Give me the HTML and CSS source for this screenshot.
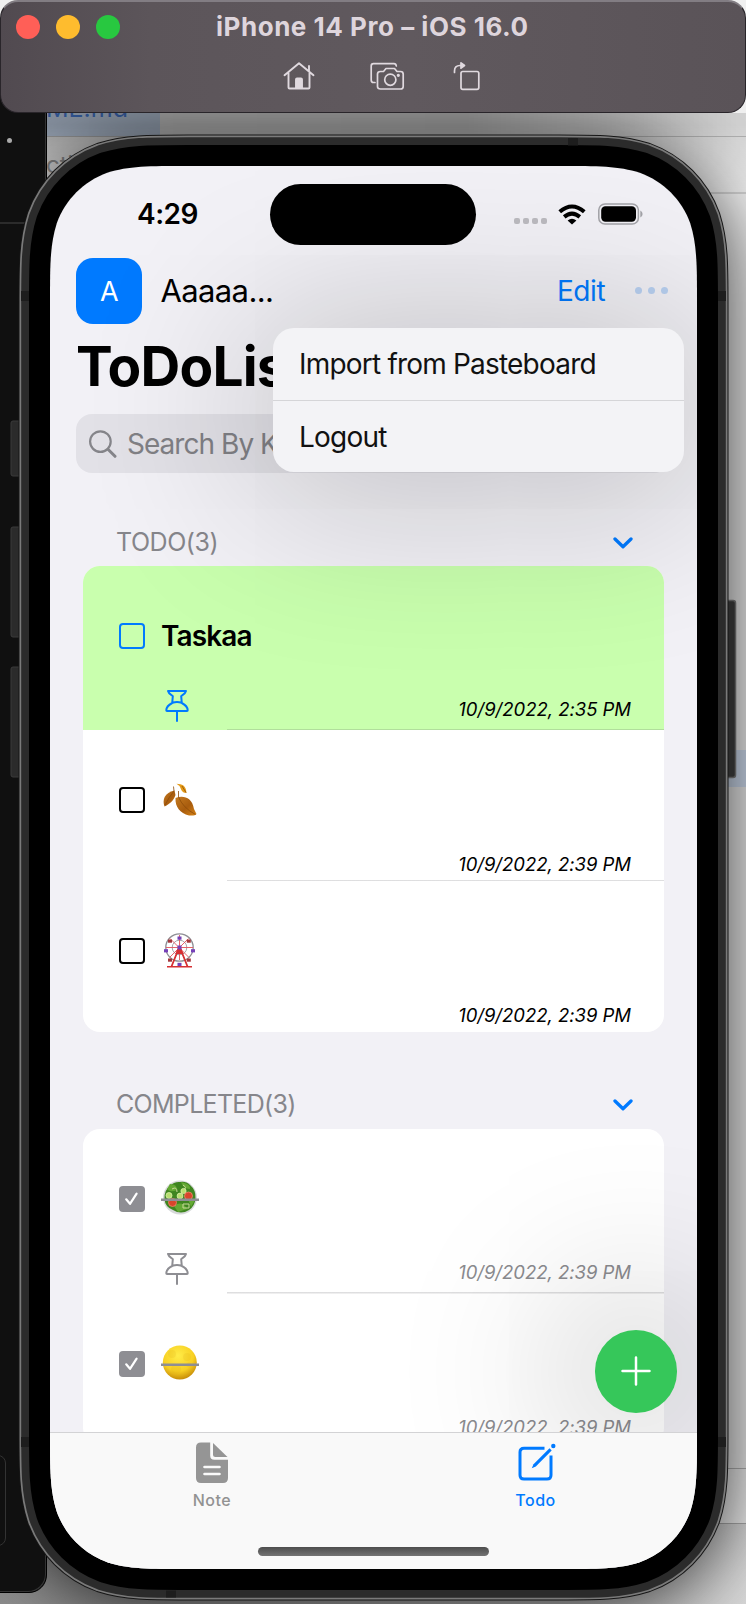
FILE: index.html
```html
<!DOCTYPE html>
<html lang="en">
<head>
<meta charset="utf-8">
<title>Simulator</title>
<link rel="stylesheet" href="styles.css">
</head>
<body>
<svg class="defs" width="0" height="0">
  <defs>
    <path id="screen-shape" d="M138.3 0H508.7C548.5 0 568.4 0 589.8 6.8C613.3 15.3 631.7 33.7 640.2 57.2C647 78.6 647 98.5 647 138.3V1264.7C647 1304.5 647 1324.4 640.2 1345.8C631.7 1369.3 613.3 1387.7 589.8 1396.2C568.4 1403 548.5 1403 508.7 1403H138.3C98.5 1403 78.6 1403 57.2 1396.2C33.7 1387.7 15.3 1369.3 6.8 1345.8C0 1324.4 0 1304.5 0 1264.7V138.3C0 98.5 0 78.6 6.8 57.2C15.3 33.7 33.7 15.3 57.2 6.8C78.6 0 98.5 0 138.3 0Z"/>
    <symbol id="pin" viewBox="0 0 24 34">
      <path d="M3 1.9H21C20.4 4.4 17.6 6 16.2 7.3L16.8 14C20 15.6 22.6 18.5 22.7 21.3Q22.7 22 22 22H2Q1.300 22 1.3 21.3C1.400 18.500 4 15.600 7.200 14L7.800 7.300C6.400 6 3.600 4.400 3 1.900ZM7.500 13.700Q12 12.400 16.500 13.700M12 22V32" fill="none" stroke="currentColor" stroke-width="2" stroke-linecap="round" stroke-linejoin="round"/>
    </symbol>
    <symbol id="chevron" viewBox="0 0 20 12">
      <path d="M2 2 10 9.800 18 2" fill="none" stroke="currentColor" stroke-width="3.300" stroke-linecap="round" stroke-linejoin="round"/>
    </symbol>
    <symbol id="tick" viewBox="0 0 25 25">
      <path d="M7.200 13.300 11 17.800 17.600 7.600" fill="none" stroke="#fff" stroke-width="2.200" stroke-linecap="round" stroke-linejoin="round"/>
    </symbol>
  </defs>
</svg>

<div class="desktop">
  <div class="editor">
    <div class="editor-file">ME.md</div>
    <div class="editor-text">cti</div>
    <div class="editor-mark"></div>
    <div class="editor-foot"></div>
  </div>
  <div class="terminal">
    <i class="terminal-dot"></i>
    <i class="terminal-rule"></i>
    <i class="terminal-box"></i>
  </div>

  <div class="phone-shadow"></div>
  <svg class="phone-frame" viewBox="0 0 746 1604" width="746" height="1604">
    <g fill="#2b2b2b" stroke="#3b3b3b" stroke-width="1">
      <rect x="11" y="421" width="12" height="55" rx="2"/>
      <rect x="11" y="527" width="12" height="110" rx="2"/>
      <rect x="11" y="667" width="12" height="110" rx="2"/>
      <rect x="722" y="600.500" width="13.500" height="177" rx="2.500" stroke="#555" stroke-width="1.500"/>
    </g>
    <g transform="translate(50 166)" fill="#000">
      <use href="#screen-shape" stroke="#161616" stroke-width="63"/>
      <use href="#screen-shape" stroke="#7a7a7a" stroke-width="61"/>
      <use href="#screen-shape" stroke="#2b2b2b" stroke-width="57.600"/>
      <use href="#screen-shape" stroke="#000" stroke-width="42"/>
    </g>
    <g fill="#1d1d1d">
      <rect x="21" y="291" width="8" height="10"/>
      <rect x="718" y="291" width="8" height="10"/>
      <rect x="21" y="1437" width="8" height="10"/>
      <rect x="718" y="1437" width="8" height="10"/>
      <rect x="568" y="138" width="10" height="7.500"/>
      <rect x="166" y="1590.500" width="10" height="7"/>
    </g>
  </svg>

  <header class="titlebar">
    <div class="title-row">
      <i class="light red"></i><i class="light amber"></i><i class="light green"></i>
      <h1 class="title">iPhone 14 Pro – iOS 16.0</h1>
    </div>
    <div class="tools">
      <svg class="tool-home" viewBox="0 0 32 30" width="32" height="30" fill="none" stroke="#e0d9df" stroke-width="1.900" stroke-linecap="round" stroke-linejoin="round">
        <path d="M1.500 14.200 16 2.200 30.500 14.200M5.500 12V26.500Q5.500 27.500 6.500 27.500H25.500Q26.500 27.500 26.500 26.500V12M26 10V5"/>
        <path d="M13 27V18.500Q13 17.500 14 17.500H18Q19 17.500 19 18.500V27Z" fill="#e0d9df"/>
      </svg>
      <svg class="tool-camera" viewBox="0 0 35 30" width="35" height="30" fill="none" stroke="#e0d9df" stroke-width="1.700" stroke-linecap="round" stroke-linejoin="round">
        <path d="M5 21.500H3.500Q1.200 21.500 1.200 19V5Q1.200 2.600 3.500 2.600H24Q26 2.600 26.300 5"/>
        <path d="M10.500 10.500H13.500L16 7.500H24.500L27 10.500H30.500Q33.200 10.500 33.200 13V25.500Q33.200 28 30.500 28H10.500Q7.500 28 7.500 25.500V13Q7.500 10.500 10.500 10.500Z"/>
        <circle cx="20.300" cy="18.700" r="5.600"/><circle cx="28.300" cy="14.300" r=".8"/>
      </svg>
      <svg class="tool-rotate" viewBox="0 0 28 30" width="28" height="30" fill="none" stroke="#e0d9df" stroke-width="1.700" stroke-linecap="round" stroke-linejoin="round">
        <rect x="8" y="10.500" width="17.800" height="17.800" rx="1.800"/>
        <path d="M1.500 11.500V10Q1.500 4.500 7 4.500H10"/>
        <path d="M8 1.800V7.200L11.500 4.500Z" fill="#e0d9df"/>
      </svg>
    </div>
  </header>

  <main class="screen">
    <div class="status">
      <span class="clock">4:29</span>
      <span class="island"></span>
      <span class="signal"><i></i><i></i><i></i><i></i></span>
      <svg class="wifi" viewBox="0 0 28 21" width="28" height="21" fill="none" stroke="#000" stroke-width="4">
        <path d="M1.700 7.800Q14-2.800 26.300 7.800M6.200 12.900Q14 6.400 21.800 12.900"/>
        <path d="M14 20.500 9.600 16.600Q14 13 18.400 16.600Z" fill="#000" stroke="none"/>
      </svg>
      <svg class="battery" viewBox="0 0 45 22" width="45" height="22">
        <rect x=".8" y=".9" width="39.600" height="20.200" rx="6.200" fill="none" stroke="#a3a3a8" stroke-width="1.500"/>
        <rect x="3.200" y="3.300" width="34.800" height="15.400" rx="4.200"/>
        <path d="M42.300 7.500Q44.600 8.500 44.600 11T42.300 14.500Z" fill="#a3a3a8"/>
      </svg>
    </div>

    <div class="nav">
      <div class="avatar">A</div>
      <span class="user">Aaaaa...</span>
      <span class="edit">Edit</span>
      <span class="more"><i></i><i></i><i></i></span>
    </div>
    <h2 class="heading">ToDoList</h2>
    <div class="search">
      <svg viewBox="0 0 28 28" width="28" height="28" fill="none" stroke="#85858a" stroke-linecap="round">
        <circle cx="11.400" cy="11.600" r="10.300" stroke-width="2.200"/><path d="M19.200 19.500 26 26.300" stroke-width="3"/>
      </svg>
      <span class="search-text">Search By K</span>
    </div>

    <div class="section-head first"><span class="sec-todo">TODO(3)</span><svg class="chev" width="20" height="12"><use href="#chevron"/></svg></div>
    <div class="card">
      <div class="row pinned">
        <div class="line"><i class="box blue"></i><span class="task">Taskaa</span></div>
        <svg class="pin blue-pin" width="24" height="34"><use href="#pin"/></svg>
        <time class="date">10/9/2022, 2:35 PM</time>
      </div>
      <div class="row">
        <div class="line"><i class="box"></i>
          <svg class="emoji" viewBox="0 0 38 38" width="38" height="38">
            <defs><linearGradient id="leaf" x1="0" y1="0" x2="1" y2="1"><stop offset="0" stop-color="#c47a20"/><stop offset=".55" stop-color="#a85c0e"/><stop offset="1" stop-color="#d98516"/></linearGradient></defs>
            <path d="M3.500 25.500C1 19 3.500 11.500 13.500 9.500L14.500 14C13 19 9 23 3.500 25.500Z" fill="url(#leaf)"/>
            <path d="M14.500 17C22 14 31 16 33 28L35.500 33C34 35 31 34.500 28 34.500C19 32 14 26 14.500 17Z" fill="url(#leaf)"/>
            <path d="M15.500 2.800C21 3.500 25 4 25.500 12C20 12 20 7 18.500 5Z" fill="#e39a18"/>
            <path d="M4 24Q8 16 13 10L12.500 5.500M34.500 33.500Q22 27 17.500 16V10M21 5 25 11.500" fill="none" stroke="#8d4b09" stroke-width=".8"/>
          </svg>
        </div>
        <time class="date">10/9/2022, 2:39 PM</time>
      </div>
      <div class="row">
        <div class="line"><i class="box"></i>
          <svg class="emoji" viewBox="0 0 38 38" width="38" height="38">
            <g fill="none"><circle cx="18.500" cy="15.500" r="13.700" stroke="#8e8e94" stroke-width="1.300"/><circle cx="18.500" cy="15.500" r="7.300" stroke="#a5a5aa" stroke-width="1"/>
            <path d="M18.500 3V28M5 15.500H32M9 6.500 27.500 25M27.500 6.500 9 25" stroke="#e2525a" stroke-width=".9"/>
            <path d="M17.500 17 10.500 34.500M19.500 17 26.500 34.500" stroke="#d62f32" stroke-width="1.800"/><path d="M6 34.800H31" stroke="#d62f32" stroke-width="1.500"/></g>
            <path d="M15.500 19 17 16H20L22.500 22H14.500Z" fill="#d62f32"/>
            <g fill="#7540b8"><rect x="16.500" y="13.500" width="4" height="4"/><rect x="16.500" y="4.500" width="4" height="3.200"/><rect x="3" y="17.200" width="4" height="3.200"/><rect x="30" y="17.200" width="4" height="3.200"/><rect x="16.500" y="30.800" width="4" height="3.200"/></g>
            <g fill="#a3363b"><rect x="7" y="7.500" width="4" height="3.200"/><rect x="25.800" y="7.500" width="4" height="3.200"/><rect x="7" y="26.500" width="4" height="3.200"/><rect x="25.800" y="26.500" width="4" height="3.200"/></g>
          </svg>
        </div>
        <time class="date">10/9/2022, 2:39 PM</time>
      </div>
    </div>

    <div class="section-head second"><span class="sec-done">COMPLETED(3)</span><svg class="chev" width="20" height="12"><use href="#chevron"/></svg></div>
    <div class="card done">
      <div class="row pinned">
        <div class="line"><i class="box"><svg width="25" height="25"><use href="#tick"/></svg></i>
          <svg class="emoji" viewBox="0 0 38 38" width="38" height="38">
            <circle cx="19" cy="17.500" r="17" fill="#d7d9da"/>
            <path d="M19 2Q25 1 29 5Q35 10 34.500 18Q34 26 28 30Q20 35 12 30Q4 27 3.500 19Q3 10 9 6Q13 1.500 19 2Z" fill="#3f8520"/>
            <g fill="#64a934"><path d="M9 4Q16 4 16 10Q9 13 6 9Z"/><path d="M20 2Q30 4 29 9Q22 9 20 2Z"/><path d="M13 26Q21 20 26 29L17 32Z"/><path d="M27 19 34 20 30 27Z"/></g>
            <path d="M11 9Q16 6 16 12M22 5Q27 8 22 10M22 24H28V28H22Z" fill="none" stroke="#c9d898" stroke-width="1"/>
            <g fill="#b9df71" stroke="#d9efa8" stroke-width=".8"><circle cx="8" cy="15.500" r="3"/><circle cx="19" cy="16" r="2.900"/><circle cx="22.500" cy="11" r="2.600"/></g>
            <g fill="#d9452c" stroke="#ed8b6b" stroke-width=".8"><circle cx="27.500" cy="16" r="4"/><circle cx="11.500" cy="22.500" r="4"/></g>
            <path d="M0 19.800H38" stroke="#8e8e93" stroke-width="2.400"/>
          </svg>
        </div>
        <svg class="pin" width="24" height="34"><use href="#pin"/></svg>
        <time class="date">10/9/2022, 2:39 PM</time>
      </div>
      <div class="row">
        <div class="line"><i class="box"><svg width="25" height="25"><use href="#tick"/></svg></i>
          <svg class="emoji" viewBox="0 0 38 38" width="38" height="38">
            <defs><radialGradient id="moon" cx=".45" cy=".3" r=".7"><stop offset="0" stop-color="#ffec48"/><stop offset=".65" stop-color="#f8d022"/><stop offset="1" stop-color="#c88d08"/></radialGradient></defs>
            <circle cx="18.800" cy="17.500" r="17" fill="url(#moon)"/>
            <g fill="#d9a814" opacity=".16"><circle cx="11" cy="9" r="4"/><circle cx="26" cy="12" r="4"/><circle cx="15" cy="24" r="5"/><circle cx="28" cy="20" r="2.500"/></g>
            <path d="M0 19.800H38" stroke="#8e8e93" stroke-width="2.400"/>
          </svg>
        </div>
        <time class="date">10/9/2022, 2:39 PM</time>
      </div>
    </div>

    <div class="menu">
      <div class="menu-item import">Import from Pasteboard</div>
      <div class="menu-item logout">Logout</div>
    </div>

    <div class="fab">
      <svg viewBox="0 0 30 30" width="30" height="30"><path d="M15 1.500V28.500M1.500 15H28.500" stroke="#fff" stroke-width="2.500" stroke-linecap="round"/></svg>
    </div>

    <nav class="tabs">
      <div class="tab">
        <svg viewBox="0 0 40 44" width="40" height="44">
          <path d="M4 6.500Q4 1.500 9 1.500H18.200V14.500Q18.200 18.800 22.500 18.800H36V37Q36 42 31 42H9Q4 42 4 37Z" fill="#959595"/>
          <path d="M21 2V13.500Q21 16 23.500 16H35.500Z" fill="#959595"/>
          <path d="M12.500 26H27.500M12.500 33H27.500" stroke="#fafafa" stroke-width="2.600" stroke-linecap="round"/>
        </svg>
        <span class="tab-label">Note</span>
      </div>
      <div class="tab active">
        <svg viewBox="0 0 40 44" width="40" height="44" fill="none" stroke="#007aff" stroke-width="3">
          <path d="M28.500 7.300H8Q4 7.300 4 11.300V34Q4 38 8 38H31Q35 38 35 34V14.500"/>
          <path d="M15.800 27.300 17.500 23.200 33.500 7.300 35.700 9.500 19.800 25.400Z" fill="#007aff" stroke="none"/>
          <circle cx="37.300" cy="5" r="2.200" fill="#007aff" stroke="none"/>
        </svg>
        <span class="tab-label">Todo</span>
      </div>
      <div class="home-bar"></div>
    </nav>
  </main>
</div>
</body>
</html>
```

FILE: styles.css
```css
* { box-sizing: border-box; }
body { margin: 0; font-family: Inter, "Liberation Sans", sans-serif; }
.defs { position: absolute; }
i { display: block; font-style: normal; }

/* Desktop behind the simulator */
.desktop {
  position: relative;
  width: 746px;
  height: 1604px;
  overflow: hidden;
  background: linear-gradient(90deg, #8d8d8d, #d8d8d8);
}
.editor {
  position: absolute;
  left: 0;
  top: 0;
  width: 760px;
  height: 1524px;
  background: linear-gradient(#c4c4c4, #c4c4c4) 0 136px / 100% 1px no-repeat,
    linear-gradient(#d0d0d0, #d0d0d0) 0 192px / 100% 2px no-repeat, #f0f0f0;
  border-bottom: 1px solid #aaa;
}
.editor-file {
  position: absolute;
  left: 0;
  top: 90px;
  width: 160px;
  height: 46px;
  padding-left: 46px;
  background: #ccdcf2;
  color: #4a80dd;
  font-size: 25px;
  line-height: 37px;
}
.editor-text {
  position: absolute;
  left: 46px;
  top: 150px;
  color: #999;
  font-size: 24px;
  line-height: 30px;
}
.editor-mark {
  position: absolute;
  left: 700px;
  top: 750px;
  width: 60px;
  height: 37px;
  background: #d3e0f3;
}
.editor-foot {
  position: absolute;
  left: 700px;
  top: 1468px;
  width: 60px;
  height: 1px;
  background: #b5b5b5;
}
.terminal {
  position: absolute;
  left: -20px;
  top: 20px;
  width: 67px;
  height: 1573px;
  border: 1px solid #000;
  border-radius: 18px;
  background: #101010;
  box-shadow: inset -1px -1px 0 #333;
  z-index: 1;
}
.terminal-dot {
  position: absolute;
  left: 26px;
  top: 117px;
  width: 5px;
  height: 5px;
  border-radius: 50%;
  background: #aaa;
}
.terminal-rule {
  position: absolute;
  left: 0;
  top: 201px;
  width: 60px;
  height: 2px;
  background: #2b2b2b;
}
.terminal-box {
  position: absolute;
  left: -10px;
  top: 1434px;
  width: 35px;
  height: 91px;
  border: 1px solid #333;
  border-radius: 8px;
}
.phone-shadow {
  position: absolute;
  left: 24px;
  top: 142px;
  width: 700px;
  height: 1452px;
  border-radius: 125px;
  box-shadow: 0 10px 70px 10px rgba(0, 0, 0, .7);
}
.phone-frame { position: absolute; left: 0; top: 0; z-index: 2; }

/* Simulator title bar */
.titlebar {
  position: absolute;
  left: 0;
  top: 0;
  width: 746px;
  height: 113px;
  border: 1px solid #29252a;
  border-top: 2px solid #827d83;
  border-radius: 18px;
  background: linear-gradient(90deg, #514a50, #5c555a 20%, #60595e 55%, #5a5358);
  z-index: 1;
}
.titlebar::after {
  content: "";
  position: absolute;
  left: 46px;
  top: 111px;
  width: 700px;
  height: 80px;
  background: linear-gradient(90deg, rgba(0, 0, 0, .34), rgba(0, 0, 0, .36) 60%, rgba(0, 0, 0, .12));
  -webkit-mask-image: linear-gradient(#000 15%, transparent);
  mask-image: linear-gradient(#000 15%, transparent);
}
.title-row {
  display: flex;
  gap: 16px;
  align-items: center;
  height: 50px;
  padding-left: 15px;
}
.light { width: 24px; height: 24px; border-radius: 50%; }
.red { background: #ff5f57; }
.amber { background: #febc2e; }
.green { background: #28c840; }
.title {
  margin: 0 0 0 80px;
  color: #ded5dc;
  font-size: 26px;
  font-weight: 700;
  line-height: 30px;
  white-space: nowrap;
  letter-spacing: .53px;
}
.tools { display: flex; padding: 9px 0 0 282px; }
.tool-camera { margin-left: 55px; }
.tool-rotate { margin-left: 48px; }

/* Phone screen */
.screen {
  position: absolute;
  left: 50px;
  top: 166px;
  width: 647px;
  height: 1403px;
  overflow: hidden;
  background: #f2f1f6;
  clip-path: path("M138.3 0H508.7C548.5 0 568.4 0 589.8 6.8C613.3 15.3 631.7 33.7 640.2 57.2C647 78.6 647 98.5 647 138.3V1264.7C647 1304.5 647 1324.4 640.2 1345.8C631.7 1369.3 613.3 1387.7 589.8 1396.2C568.4 1403 548.5 1403 508.7 1403H138.3C98.5 1403 78.6 1403 57.2 1396.2C33.7 1387.7 15.3 1369.3 6.8 1345.8C0 1324.4 0 1304.5 0 1264.7V138.3C0 98.5 0 78.6 6.8 57.2C15.3 33.7 33.7 15.3 57.2 6.8C78.6 0 98.5 0 138.3 0Z");
  z-index: 3;
}
.status { display: flex; align-items: flex-start; height: 91px; padding: 18.4px 0 0 87px; }
.clock { width: 133.400px; padding-top: 12.500px; font-size: 28px; font-weight: 600; line-height: 34px; letter-spacing: -.5px; }
.island { width: 206px; height: 61px; border-radius: 31px; background: #000; }
.signal { display: flex; gap: 3px; margin: 34px 0 0 38px; }
.signal i { width: 6px; height: 6px; border-radius: 2px; background: #bcbbc0; }
.wifi { margin: 19.500px 0 0 11px; }
.battery { margin: 18.500px 0 0 12px; }

.nav { display: flex; align-items: center; height: 67px; padding-left: 26.400px; }
.avatar {
  width: 66px;
  height: 66px;
  border-radius: 17px;
  background: #007aff;
  color: #fff;
  font-size: 27px;
  line-height: 68px;
  text-align: center;
}
.user { width: 396px; padding-left: 18px; font-size: 31px; letter-spacing: -.6px; }
.edit { width: 80px; padding-left: 18.500px; color: #007aff; font-size: 28px; letter-spacing: -.4px; }
.more { display: flex; gap: 6px; margin-left: 16.500px; }
.more i { width: 7px; height: 7px; border-radius: 50%; background: #b9d1f2; }
.heading { margin: 9px 0 0 26px; font-size: 55px; font-weight: 700; line-height: 66px; letter-spacing: -.8px; }
.search {
  display: flex;
  gap: 10px;
  align-items: center;
  width: 594px;
  height: 59px;
  margin: 15px 0 0 26.400px;
  padding-left: 12.500px;
  border-radius: 16px;
  background: #e2e1e7;
  color: #808085;
}
.search-text { padding-top: 1px; font-size: 28px; letter-spacing: -.95px; }

.section-head {
  display: flex;
  justify-content: space-between;
  align-items: center;
  height: 44px;
  padding: 0 64px 0 66px;
  color: #86868b;
  font-size: 25px;
}
.sec-todo { letter-spacing: -.45px; }
.sec-done { letter-spacing: -.7px; }
.first { margin-top: 46.500px; }
.second { margin-top: 50px; }
.chev { color: #007aff; margin-top: 2px; }
.card { width: 581px; margin: 0 0 0 33px; overflow: hidden; border-radius: 17px; background: #fff; }
.first + .card { margin-top: 2px; height: 466.500px; }
.second + .card { margin-top: 3px; }
.row { display: grid; grid-template-columns: 1fr auto; height: 151px; padding: 51px 33px 0 36px; }
.row.pinned { height: 164.500px; }
.first + .card .pinned { background-color: #c9ffae; }
.row:not(:last-child) {
  background-image: linear-gradient(rgba(60, 60, 67, .17), rgba(60, 60, 67, .17));
  background-position: 144px 100%;
  background-size: 100% 1.500px;
  background-repeat: no-repeat;
}
.line { display: flex; align-items: center; grid-column: 1 / -1; height: 38px; }
.box { flex: none; width: 26px; height: 26px; border: 2.500px solid #000; border-radius: 4px; }
.box.blue { border-color: #007aff; }
.done .box { border: 0; background: #8e8e93; }
.done .box svg { display: block; }
.task { margin-left: 16px; font-size: 28px; font-weight: 600; letter-spacing: -.9px; }
.emoji { flex: none; margin-left: 16px; }
.pin { margin: 27px 0 0 46px; color: #8e8e93; }
.blue-pin { color: #007aff; }
.date { grid-column: 2; margin-top: 27px; font-size: 18.500px; font-style: italic; line-height: 24px; white-space: nowrap; letter-spacing: -.02px; }
.pinned .date { margin-top: 35px; }
.done .date { color: #8b8b8f; }

/* Pull-down menu over the list */
.menu {
  position: absolute;
  left: 222.500px;
  top: 162px;
  width: 411.500px;
  height: 144px;
  border-radius: 21px;
  background: #f3f3f6;
  box-shadow: 0 10px 170px 24px rgba(0, 0, 0, .2);
}
.menu-item { height: 72px; padding-left: 26.500px; color: #111; font-size: 28px; line-height: 73px; letter-spacing: -.8px; }
.menu-item + .menu-item { border-top: 1.500px solid #d5d5d8; }

.fab {
  position: absolute;
  left: 544.500px;
  top: 1164px;
  display: flex;
  align-items: center;
  justify-content: center;
  width: 82.500px;
  height: 82.500px;
  border-radius: 50%;
  background: #36c75a;
  box-shadow: 0 0 160px 50px rgba(0, 0, 0, .17);
}

.tabs {
  position: absolute;
  left: 0;
  bottom: 0;
  display: grid;
  grid-template-columns: 314px 333px;
  align-content: start;
  width: 647px;
  height: 137.500px;
  padding-top: 8.500px;
  border-top: 1.500px solid #d3d3d5;
  background: #f9f9f9;
}
.tab { display: flex; flex-direction: column; align-items: center; color: #929292; font-size: 16px; font-weight: 500; line-height: 22px; letter-spacing: .5px; }
.tab:first-child { padding-left: 10px; }
.tab.active { padding-left: 10px; color: #007aff; }
.tab-label { margin-top: 4px; }
.home-bar { grid-column: 1 / -1; justify-self: center; width: 231px; height: 9px; margin-top: 35.500px; border-radius: 5px; background: linear-gradient(#4d4d4d, #747474); }
```
